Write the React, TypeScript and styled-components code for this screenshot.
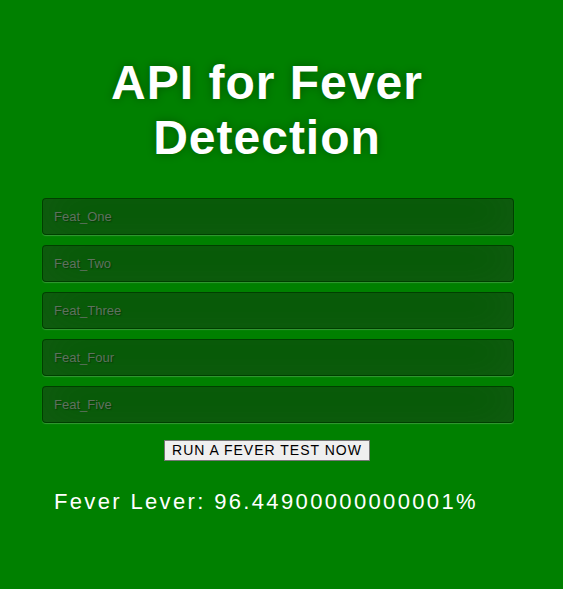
import React from "react";
import styled, { createGlobalStyle } from "styled-components";

const Global = createGlobalStyle`
  html, body { margin: 0; padding: 0; background: #008000; }
  body { font-family: "Liberation Sans", Arial, sans-serif; min-height: 589px; }
`;

const Page = styled.div`
  padding: 55px 0 0 42px;
`;

const Form = styled.div`
  width: 450px;
  display: flex;
  flex-direction: column;
`;

const Title = styled.h1`
  margin: 0 0 33px;
  color: #fff;
  font-size: 48px;
  font-weight: bold;
  letter-spacing: 1px;
  line-height: 55px;
  text-align: center;
  text-shadow: 0 0 10px rgba(0, 0, 0, 0.3);
`;

const Field = styled.input`
  width: 449px;
  margin: 0 0 10px;
  padding: 10px 10px 10px 11px;
  font-family: "Liberation Sans", Arial, sans-serif;
  font-size: 13px;
  line-height: 15px;
  color: #fff;
  text-shadow: 1px 1px 1px rgba(0, 0, 0, 0.3);
  background: rgba(0, 0, 0, 0.3);
  border: 1px solid rgba(0, 0, 0, 0.3);
  border-radius: 4px;
  outline: none;
  box-shadow: inset 0 -5px 45px rgba(100, 100, 100, 0.2), 0 1px 1px rgba(255, 255, 255, 0.2);
  &::placeholder { color: #5f715f; }
`;

const Button = styled.button`
  align-self: center;
  margin-top: 7px;
  padding: 2px 7px;
  font-family: "Liberation Sans", Arial, sans-serif;
  font-size: 14px;
  line-height: 15px;
  letter-spacing: 1px;
  color: #000;
  background: #efefef;
  border: 1px solid #767676;
  border-radius: 0;
`;

const Result = styled.p`
  margin: 28px 0 0 12px;
  color: #fff;
  font-size: 22px;
  letter-spacing: 2.35px;
`;

const fields = ["Feat_One", "Feat_Two", "Feat_Three", "Feat_Four", "Feat_Five"];

export default function App() {
  return (
    <>
      <Global />
      <Page>
        <Form>
          <Title>API for Fever Detection</Title>
          {fields.map((f) => (
            <Field key={f} placeholder={f} />
          ))}
          <Button>RUN A FEVER TEST NOW</Button>
        </Form>
        <Result>Fever Lever: 96.44900000000001%</Result>
      </Page>
    </>
  );
}
